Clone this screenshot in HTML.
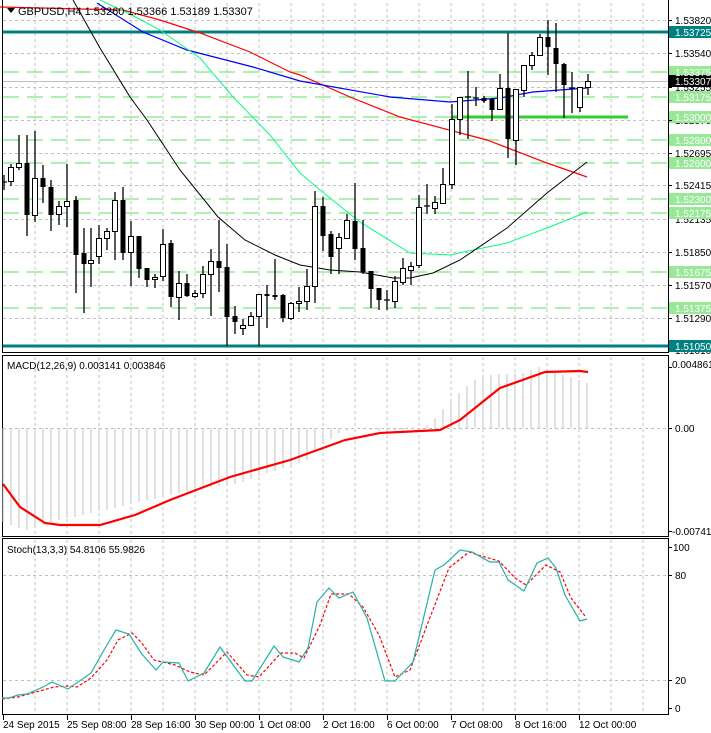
<!DOCTYPE html>
<html><head><meta charset="utf-8"><style>
html,body{margin:0;padding:0;background:#fff;}
svg{display:block;font-family:"Liberation Sans",sans-serif;}
</style></head><body>
<svg width="711" height="733" viewBox="0 0 711 733" xmlns="http://www.w3.org/2000/svg">
<rect width="711" height="733" fill="#fff"/>
<g stroke="#c0c0c0" stroke-dasharray="3,3" stroke-width="1">
<path d="M35 3V351M67 3V351M99 3V351M131 3V351M163 3V351M195 3V351M227 3V351M259 3V351M291 3V351M323 3V351M355 3V351M387 3V351M419 3V351M451 3V351M483 3V351M515 3V351M547 3V351M579 3V351M611 3V351M643 3V351"/>
<path d="M35 357V536M67 357V536M99 357V536M131 357V536M163 357V536M195 357V536M227 357V536M259 357V536M291 357V536M323 357V536M355 357V536M387 357V536M419 357V536M451 357V536M483 357V536M515 357V536M547 357V536M579 357V536M611 357V536M643 357V536"/>
<path d="M35 540V714M67 540V714M99 540V714M131 540V714M163 540V714M195 540V714M227 540V714M259 540V714M291 540V714M323 540V714M355 540V714M387 540V714M419 540V714M451 540V714M483 540V714M515 540V714M547 540V714M579 540V714M611 540V714M643 540V714"/>
<path d="M3 20.5H668M3 53.5H668M3 87.5H668M3 120.5H668M3 153.5H668M3 185.5H668M3 219.5H668M3 252.5H668M3 285.5H668M3 318.5H668M3 428.5H668M3 575.5H668M3 680.5H668"/>
</g>
<g stroke="#90ee90" stroke-width="1.5" stroke-dasharray="16,8">
<path d="M3 72H668M3 97H668M3 140H668M3 163H668M3 199H668M3 213H668M3 272H668M3 308H668M3 117H452"/>
</g>
<line x1="3" y1="81.5" x2="668" y2="81.5" stroke="#c0c0c0"/>
<line x1="452" y1="117" x2="628" y2="117" stroke="#32cd32" stroke-width="3"/>
<line x1="3" y1="32" x2="668" y2="32" stroke="#008080" stroke-width="3"/>
<line x1="3" y1="346" x2="668" y2="346" stroke="#008080" stroke-width="3"/>
<g fill="none" stroke-width="1.2">
<polyline stroke="#ff0000" points="0,7 123,10 160,20 200,33 250,52 290,72 300,75 350,97 400,117 487,140 547,163 587,177"/>
<polyline stroke="#0000ff" points="97,3 143,32 187,50 253,67 300,81 390,97 450,102 500,98 533,92 587,88"/>
<polyline stroke="#00ff7f" stroke-width="1" points="100,0 130,14 160,30 200,58 233,97 270,135 300,173 320,190 360,222 410,253 450,255 473,250 507,243 547,228 587,212"/>
<polyline stroke="#000" stroke-width="1" points="73,0 100,48 130,97 147,120 180,170 218,217 245,240 275,255 300,265 330,270 360,272 393,278 410,278 433,273 460,260 507,228 547,193 587,162"/>
</g>
<g stroke="#000" stroke-width="1.3">
<path d="M4 175V190M11 164V186M19 135V170M27 135V236M35 131V222M43 165V203M51 180V231M59 201V225M67 164V227M76 196V293M84 228V313M91 228V287M99 225V264M107 228V250M115 192V260M123 187V260M131 221V286M139 236V278M147 268V287M155 274V288M163 229V281M171 240V307M179 271V320M187 274V297M195 290V298M203 266V298M211 249V316M219 220V292M227 244V346M235 306V334M243 319V335M251 312V326M259 294V346M267 285V328M275 259V300M283 294V322M291 302V320M299 287V312M307 269V310M315 191V303M323 197V251M331 231V274M339 233V274M347 214V239M355 183V260M363 220V274M371 271V308M379 288V310M387 290V310M395 276V308M403 258V285M411 262V285M419 195V268M427 184V214M435 196V214M443 168V203M452 104V189M460 97V135M468 71V139M476 87V106M484 96V103M492 98V121M500 74V110M508 33V158M516 89V165M524 65V97M532 52V70M540 34V56M548 20V75M556 23V92M564 63V118M572 72V113M580 87V112M588 74V95"/>
<path d="M2 182H7M424 206H430M465 97H471M473 98H479M384 300H390M569 88H575"/>
</g>
<g stroke="#000" stroke-width="1" fill="#fff">
<rect x="8.5" y="167.5" width="5" height="14"/><rect x="16.5" y="163.5" width="5" height="4"/><rect x="32.5" y="178.5" width="5" height="37"/><rect x="56.5" y="206.5" width="5" height="8"/><rect x="64.5" y="201.5" width="5" height="5"/><rect x="88.5" y="260.5" width="5" height="3"/><rect x="96.5" y="238.5" width="5" height="18"/><rect x="104.5" y="231.5" width="5" height="7"/><rect x="112.5" y="200.5" width="5" height="31"/><rect x="128.5" y="236.5" width="5" height="16"/><rect x="152.5" y="277.5" width="5" height="2"/><rect x="160.5" y="244.5" width="5" height="32"/><rect x="176.5" y="283.5" width="5" height="14"/><rect x="192.5" y="293.5" width="5" height="3"/><rect x="200.5" y="274.5" width="5" height="19"/><rect x="208.5" y="261.5" width="5" height="13"/><rect x="240.5" y="325.5" width="5" height="3"/><rect x="248.5" y="316.5" width="5" height="9"/><rect x="256.5" y="294.5" width="5" height="22"/><rect x="288.5" y="303.5" width="5" height="15"/><rect x="296.5" y="301.5" width="5" height="2"/><rect x="304.5" y="286.5" width="5" height="15"/><rect x="312.5" y="206.5" width="5" height="80"/><rect x="336.5" y="237.5" width="5" height="11"/><rect x="344.5" y="220.5" width="5" height="18"/><rect x="392.5" y="281.5" width="5" height="20"/><rect x="400.5" y="268.5" width="5" height="14"/><rect x="408.5" y="266.5" width="5" height="4"/><rect x="416.5" y="207.5" width="5" height="58"/><rect x="432.5" y="202.5" width="5" height="6"/><rect x="440.5" y="184.5" width="5" height="19"/><rect x="449.5" y="119.5" width="5" height="65"/><rect x="457.5" y="97.5" width="5" height="22"/><rect x="497.5" y="88.5" width="5" height="21"/><rect x="513.5" y="89.5" width="5" height="51"/><rect x="521.5" y="65.5" width="5" height="25"/><rect x="529.5" y="55.5" width="5" height="10"/><rect x="537.5" y="37.5" width="5" height="18"/><rect x="577.5" y="87.5" width="5" height="20"/><rect x="585.5" y="81.5" width="5" height="6"/>
</g>
<g fill="#000">
<rect x="24.5" y="163" width="5" height="52"/><rect x="40.5" y="178" width="5" height="9"/><rect x="48.5" y="187" width="5" height="28"/><rect x="73.5" y="200" width="5" height="55"/><rect x="81.5" y="253" width="5" height="11"/><rect x="120.5" y="200" width="5" height="53"/><rect x="136.5" y="236" width="5" height="33"/><rect x="144.5" y="268" width="5" height="12"/><rect x="168.5" y="243" width="5" height="54"/><rect x="184.5" y="283" width="5" height="13"/><rect x="216.5" y="261" width="5" height="7"/><rect x="224.5" y="267" width="5" height="50"/><rect x="232.5" y="316" width="5" height="6"/><rect x="264.5" y="294" width="5" height="2"/><rect x="272.5" y="295" width="5" height="2"/><rect x="280.5" y="295" width="5" height="23"/><rect x="320.5" y="206" width="5" height="30"/><rect x="328.5" y="234" width="5" height="23"/><rect x="352.5" y="221" width="5" height="28"/><rect x="360.5" y="248" width="5" height="24"/><rect x="368.5" y="271" width="5" height="18"/><rect x="376.5" y="288" width="5" height="12"/><rect x="481.5" y="98" width="5" height="3"/><rect x="489.5" y="99" width="5" height="11"/><rect x="505.5" y="88" width="5" height="51"/><rect x="545.5" y="37" width="5" height="10"/><rect x="553.5" y="48" width="5" height="16"/><rect x="561.5" y="64" width="5" height="21"/>
</g>
<path d="M7 8h8l-4 5z" fill="#000"/>
<text x="18" y="15" font-size="11" fill="#000">GBPUSD,H4  1.53260 1.53366 1.53189 1.53307</text>
<g fill="none" stroke="#000" stroke-width="1">
<path d="M2.5 0V352.5H668.5V0"/>
<rect x="2.5" y="355.5" width="666" height="181"/>
<rect x="2.5" y="538.5" width="666" height="176"/>
</g>
<g font-size="10" fill="#000">
<text x="675" y="24">1.53820</text><text x="675" y="57">1.53540</text><text x="675" y="91">1.53255</text><text x="675" y="124">1.52970</text><text x="675" y="157">1.52695</text><text x="675" y="189">1.52415</text><text x="675" y="223">1.52135</text><text x="675" y="256">1.51850</text><text x="675" y="289">1.51570</text><text x="675" y="322">1.51290</text><text x="675" y="354">1.51010</text>
</g>
<g>
<rect x="669" y="26" width="42" height="12" fill="#008080"/><rect x="669" y="340" width="42" height="12" fill="#008080"/>
<g fill="#98e898"><rect x="669" y="66" width="42" height="12"/><rect x="669" y="91" width="42" height="12"/><rect x="669" y="111" width="42" height="12"/><rect x="669" y="134" width="42" height="12"/><rect x="669" y="157" width="42" height="12"/><rect x="669" y="193" width="42" height="12"/><rect x="669" y="207" width="42" height="12"/><rect x="669" y="266" width="42" height="12"/><rect x="669" y="302" width="42" height="12"/></g>
<rect x="669" y="75" width="42" height="12" fill="#000"/>
</g>
<g font-size="10" fill="#fff">
<text x="675" y="36">1.53725</text><text x="675" y="350">1.51050</text>
<text x="675" y="76">1.53375</text><text x="675" y="101">1.53175</text><text x="675" y="121">1.53000</text><text x="675" y="144">1.52800</text><text x="675" y="167">1.52600</text><text x="675" y="203">1.52300</text><text x="675" y="217">1.52175</text><text x="675" y="276">1.51675</text><text x="675" y="312">1.51375</text>
<text x="675" y="85">1.53307</text>
</g>
<g stroke="#000"><path d="M668 20.5h4M668 53.5h4M668 87.5h4M668 120.5h4M668 153.5h4M668 185.5h4M668 252.5h4M668 285.5h4M668 318.5h4M668 367.5h4M668 428.5h4M668 531.5h4M668 547.5h4M668 575.5h4M668 680.5h4M668 708.5h4"/></g>
<path stroke="#c0c0c0" stroke-width="1" fill="none" d="M3 428V522M11 428V525M19 428V528M27 428V530M35 428V527M43 428V525M51 428V522M59 428V520M67 428V518M75 428V517M83 428V515M91 428V513M99 428V511M107 428V510M115 428V508M123 428V506M131 428V504M139 428V502M147 428V500M155 428V499M163 428V497M171 428V495M179 428V493M187 428V491M195 428V490M203 428V488M211 428V487M219 428V486M227 428V485M235 428V484M243 428V482M251 428V479M259 428V476M267 428V473M275 428V471M283 428V468M291 428V466M299 428V463M307 428V460M315 428V452M323 428V444M331 428V439M339 428V433M347 428V431M371 428V430M379 428V431M387 428V431M395 428V431M403 428V430M427 428V425M435 428V418M443 428V409M451 428V400M459 428V393M467 428V386M475 428V380M483 428V376M491 428V375M499 428V374M507 428V374M515 428V373M523 428V373M531 428V370M539 428V367M547 428V369M555 428V372M563 428V375M571 428V377M579 428V380M587 428V383"/>
<polyline fill="none" stroke="#ff0000" stroke-width="2.2" points="3,484 20,507 45,523 60,525 100,525 135,515 170,500 230,477 290,460 345,440 380,433 400,432 440,430 460,420 500,388 545,372 580,371 588,372"/>
<text x="7" y="369" font-size="10" fill="#000">MACD(12,26,9) 0.003141 0.003846</text>
<g font-size="10" fill="#000"><text x="672" y="368">0.004861</text><text x="675" y="432">0.00</text><text x="672" y="535">-0.007417</text></g>
<polyline fill="none" stroke="#ff0000" stroke-width="1.2" stroke-dasharray="3,2" points="2,699 18,697 36,692 54,687 68,686 77,687 91,678 107,660 118,640 132,633 141,642 154,660 175,665 190,672 204,675 227,652 247,675 259,677 281,653 295,653 304,658 320,625 331,594 349,594 363,607 379,635 395,677 410,670 429,620 449,568 469,552 478,555 499,561 515,578 526,585 546,565 560,572 571,598 585,616"/>
<polyline fill="none" stroke="#20b2aa" stroke-width="1.2" points="2,698 9,698 18,695 27,694 43,687 52,682 68,689 91,673 104,650 116,630 129,634 141,653 156,670 163,662 179,663 188,681 204,673 220,647 245,681 252,681 274,646 283,657 299,662 308,648 317,602 329,588 339,598 353,592 367,618 385,681 395,681 413,662 435,570 444,565 460,550 472,552 490,562 499,562 508,580 524,591 537,563 548,558 556,568 565,595 580,621 587,619"/>
<text x="7" y="553" font-size="10" fill="#000">Stoch(13,3,3) 54.8106 55.9826</text>
<g font-size="10" fill="#000"><text x="673" y="551">100</text><text x="675" y="579">80</text><text x="675" y="684">20</text><text x="675" y="712">0</text></g>
<g stroke="#000"><path d="M3.5 715v5M67.5 715v5M131.5 715v5M195.5 715v5M259.5 715v5M323.5 715v5M387.5 715v5M451.5 715v5M515.5 715v5M579.5 715v5"/></g>
<g font-size="10" fill="#000">
<text x="3" y="728">24 Sep 2015</text><text x="67" y="728">25 Sep 08:00</text><text x="131" y="728">28 Sep 16:00</text><text x="195" y="728">30 Sep 00:00</text><text x="259" y="728">1 Oct 08:00</text><text x="323" y="728">2 Oct 16:00</text><text x="387" y="728">6 Oct 00:00</text><text x="451" y="728">7 Oct 08:00</text><text x="515" y="728">8 Oct 16:00</text><text x="579" y="728">12 Oct 00:00</text>
</g>
</svg>
</body></html>
